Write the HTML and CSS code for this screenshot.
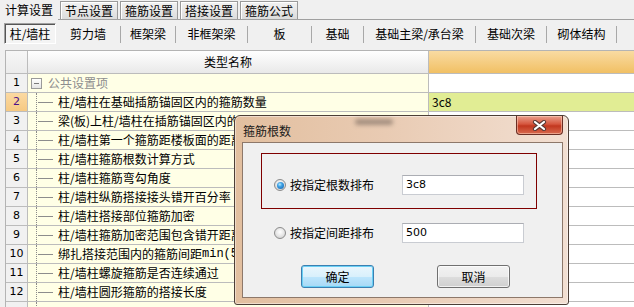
FILE: index.html
```html
<!DOCTYPE html>
<html lang="zh">
<head>
<meta charset="utf-8">
<link rel="stylesheet" href="styles.css">
</head>
<body>
<div class="tabbar">
  <div class="tab active">计算设置</div>
  <div class="tab">节点设置</div>
  <div class="tab">箍筋设置</div>
  <div class="tab">搭接设置</div>
  <div class="tab">箍筋公式</div>
</div>
<div class="subtabs">
  <div class="sub active">柱/墙柱</div>
  <div class="sub">剪力墙</div>
  <div class="sub">框架梁</div>
  <div class="sub">非框架梁</div>
  <div class="sub">板</div>
  <div class="sub">基础</div>
  <div class="sub">基础主梁/承台梁</div>
  <div class="sub">基础次梁</div>
  <div class="sub">砌体结构</div>
  <div class="sub">其它</div>
</div>
<div class="grid">
  <div class="c num hd"></div><div class="c name hd">类型名称</div><div class="c val hdv"></div>

  <div class="c num">1</div><div class="c name"><span class="minus"></span><span class="group">公共设置项</span></div><div class="c val"></div>
  <div class="c num cur">2</div><div class="c name"><span class="br"></span>柱/墙柱在基础插筋锚固区内的箍筋数量</div><div class="c val sel">3c8</div>
  <div class="c num">3</div><div class="c name"><span class="br"></span>梁(板)上柱/墙柱在插筋锚固区内的箍筋数量</div><div class="c val"></div>
  <div class="c num">4</div><div class="c name"><span class="br"></span>柱/墙柱第一个箍筋距楼板面的距离</div><div class="c val"></div>
  <div class="c num">5</div><div class="c name"><span class="br"></span>柱/墙柱箍筋根数计算方式</div><div class="c val"></div>
  <div class="c num">6</div><div class="c name"><span class="br"></span>柱/墙柱箍筋弯勾角度</div><div class="c val"></div>
  <div class="c num">7</div><div class="c name"><span class="br"></span>柱/墙柱纵筋搭接接头错开百分率</div><div class="c val"></div>
  <div class="c num">8</div><div class="c name"><span class="br"></span>柱/墙柱搭接部位箍筋加密</div><div class="c val"></div>
  <div class="c num">9</div><div class="c name"><span class="br"></span>柱/墙柱箍筋加密范围包含错开距离</div><div class="c val"></div>
  <div class="c num">10</div><div class="c name"><span class="br"></span>绑扎搭接范围内的箍筋间距<span class="mono">min(5d,100)</span></div><div class="c val"></div>
  <div class="c num">11</div><div class="c name"><span class="br"></span>柱/墙柱螺旋箍筋是否连续通过</div><div class="c val"></div>
  <div class="c num">12</div><div class="c name"><span class="br"></span>柱/墙柱圆形箍筋的搭接长度</div><div class="c val"></div>
  <div class="c num"></div><div class="c name"><span class="br"></span></div><div class="c val"></div>
</div>

<div class="dialog">
  <div class="titlebar">
    <span class="dtitle">箍筋根数</span>
    <span class="ghost"></span>
    <button class="close" type="button" aria-label="关闭">
      <svg width="15" height="11" viewBox="0 0 15 11">
        <path d="M3 2 L12 9 M12 2 L3 9" stroke="#5a3a36" stroke-width="4.2" stroke-linecap="round" fill="none"/>
        <path d="M3 2 L12 9 M12 2 L3 9" stroke="#ffffff" stroke-width="2.2" stroke-linecap="round" fill="none"/>
      </svg>
    </button>
  </div>
  <div class="client">
    <div class="groupbox">
      <div class="optrow">
        <span class="radio on"></span>
        <span class="olabel">按指定根数排布</span>
        <span class="input">3c8</span>
      </div>
    </div>
    <div class="optrow second">
      <span class="radio"></span>
      <span class="olabel">按指定间距排布</span>
      <span class="input">500</span>
    </div>
    <div class="buttons">
      <button class="btn default" type="button">确定</button>
      <button class="btn" type="button">取消</button>
    </div>
  </div>
</div>
</body>
</html>
```
FILE: styles.css
```css
html, body {
  margin: 0;
  padding: 0;
}
body {
  width: 634px;
  height: 307px;
  overflow: hidden;
  background: #f0f0f0;
  font-family: "Noto Sans CJK SC", "Noto Sans", sans-serif;
  font-size: 12px;
  color: #000;
  position: relative;
}

/* top tabs */
.tabbar {
  display: flex;
  align-items: flex-end;
  height: 20px;
  box-sizing: border-box;
  border-bottom: 1px solid #a0a0a0;
  gap: 2px;
}
.tab {
  width: 58px;
  height: 18px;
  box-sizing: border-box;
  border: 1px solid #9a9a9a;
  border-bottom: none;
  background: linear-gradient(#f2f2f2, #dcdcdc);
  box-shadow: inset 1px 1px 0 #fff;
  text-align: center;
  line-height: 18px;
  white-space: nowrap;
}
.tab.active {
  height: 20px;
  margin-bottom: -1px;
  border: none;
  background: #f0f0f0;
  box-shadow: none;
  line-height: 19px;
}

/* sub tabs */
.subtabs {
  display: grid;
  grid-template-columns: 52px 65px 55px 72px 64px 52px 112px 71px 70px 60px;
  margin: 3px 0 0 4px;
  height: 21px;
  white-space: nowrap;
}
.sub {
  text-align: center;
  border-right: 1px solid #a8a8a8;
  height: 17px;
  margin-top: 3px;
  line-height: 15px;
}
.sub.active {
  height: 21px;
  margin-top: 0;
  line-height: 19px;
  box-sizing: border-box;
  border-top: 1px solid #a0a0a0;
  border-left: 1px solid #a0a0a0;
  border-right: 1px solid #fff;
  border-bottom: 1px solid #fff;
  box-shadow: inset 1px 1px 0 #555;
  background: #f4f4f4;
}

/* data grid */
.grid {
  margin: 6px 0 0 5px;
  display: grid;
  grid-template-columns: 22px 401px 260px;
  grid-auto-rows: 19px;
  grid-template-rows: 23px;
  border-top: 1px solid #b4b4b4;
  border-left: 1px solid #b4b4b4;
}
.c {
  box-sizing: border-box;
  border-right: 1px solid #bcbcbc;
  border-bottom: 1px solid #bcbcbc;
  line-height: 18px;
  white-space: nowrap;
  overflow: hidden;
  display: flex;
  align-items: stretch;
}
.num {
  justify-content: center;
  background: #f1f1f1;
  color: #000;
  font-family: "DejaVu Sans", sans-serif;
  font-size: 11px;
}
.num.cur {
  background: linear-gradient(#fbd9a2, #f6c982);
  color: #4b0f8a;
}
.name {
  background: #ffffe6;
}
.val {
  background: #ffffff;
  padding-left: 3px;
}
.val.sel {
  background: #e1ed94;
}
.hd {
  background: linear-gradient(#ffffff, #e9e9e9);
  justify-content: center;
  line-height: 22px;
}
.num.hd {
  background: linear-gradient(#f6f6f6, #ebebeb);
}
.hdv {
  background: linear-gradient(#f9dba2, #f1c064);
}
.minus {
  width: 11px;
  height: 11px;
  box-sizing: border-box;
  margin: 4px 0 0 3px;
  border: 1px solid #9a9a9a;
  background: linear-gradient(#7a7a7a, #7a7a7a) no-repeat center / 5px 1px, linear-gradient(#ffffff, #e4e4e4);
}
.group {
  color: #8e8e8e;
  margin-left: 6px;
}
.br {
  width: 22px;
  margin-left: 8px;
  flex: none;
  box-sizing: border-box;
  border-left: 1px dotted #8a8a8a;
  background: linear-gradient(#8c8c8c, #8c8c8c) no-repeat 1px 9px / 15px 1px;
}
.mono {
  font-family: "Liberation Mono", monospace;
  font-size: 12px;
}

/* dialog */
.dialog {
  position: absolute;
  left: 234px;
  top: 115px;
  width: 335px;
  height: 190px;
  box-sizing: border-box;
  border: 1px solid #4c3e36;
  border-radius: 6px 6px 3px 3px;
  background: linear-gradient(90deg, #e2bf9f 0%, #e9cbb3 45%, #f2dfd2 100%);
  box-shadow: inset 0 0 0 1px rgba(255,255,255,0.45);
  padding: 0 5px 6px 7px;
  display: flex;
  flex-direction: column;
}
.titlebar {
  height: 26px;
  display: flex;
  align-items: flex-start;
  flex: none;
}
.dtitle {
  margin: 7px 0 0 1px;
  line-height: 16px;
  color: #1a1a1a;
}
.ghost {
  margin: 3px 0 0 64px;
  width: 38px;
  height: 6px;
  border-radius: 3px;
  background: rgba(110, 95, 85, 0.55);
  filter: blur(2px);
}
.close {
  margin-left: auto;
  width: 47px;
  height: 19px;
  padding: 0;
  border: 1px solid #6a2e24;
  border-top: none;
  border-radius: 0 0 4px 4px;
  background: linear-gradient(#e9a08e 0%, #d6563e 45%, #c2371f 55%, #d86a4e 100%);
  box-shadow: inset 0 0 0 1px rgba(255,220,200,0.5);
  display: flex;
  align-items: center;
  justify-content: center;
}
.client {
  flex: 1;
  background: #f0f0f0;
  border: 1px solid #8d786a;
  display: flex;
  flex-direction: column;
  align-items: flex-start;
}
.groupbox {
  margin: 10px 0 0 18px;
  width: 276px;
  height: 56px;
  box-sizing: border-box;
  border: 1px solid #7f0000;
  padding: 21px 0 0 12px;
}
.optrow {
  display: flex;
  align-items: center;
  height: 20px;
}
.optrow.second {
  margin: 14px 0 0 31px;
}
.radio {
  width: 12px;
  height: 12px;
  box-sizing: border-box;
  border-radius: 50%;
  border: 1px solid #8b8b8b;
  background: radial-gradient(circle at 50% 40%, #ffffff 0, #e9e9e9 45%, #c9c9c9 100%);
  margin-right: 4px;
  flex: none;
  display: flex;
  align-items: center;
  justify-content: center;
}
.radio.on::after {
  content: "";
  width: 7px;
  height: 7px;
  border-radius: 50%;
  background: radial-gradient(circle at 40% 35%, #b8ecff 0, #3fa2e6 35%, #0d5aa6 100%);
}
.olabel {
  width: 112px;
  line-height: 16px;
}
.input {
  width: 122px;
  height: 20px;
  box-sizing: border-box;
  border: 1px solid #c9ccd2;
  border-top-color: #abadb3;
  background: #fff;
  padding-left: 3px;
  line-height: 17px;
  font-family: "DejaVu Sans", sans-serif;
  font-size: 11px;
}
.buttons {
  display: flex;
  gap: 63px;
  margin: 22px 0 0 58px;
}
.btn {
  width: 73px;
  height: 23px;
  padding: 0;
  font-family: "Noto Sans CJK SC", sans-serif;
  font-size: 12px;
  color: #000;
  border: 1px solid #707070;
  border-radius: 3px;
  background: linear-gradient(#f2f2f2 0%, #ebebeb 50%, #dddddd 51%, #cfcfcf 100%);
  box-shadow: inset 0 0 0 1px rgba(255,255,255,0.7);
  line-height: 20px;
}
.btn.default {
  border-color: #3c7fb1;
  background: linear-gradient(#eaf6fd 0%, #d9f0fc 50%, #bee6fd 51%, #a7d9f5 100%);
  box-shadow: inset 0 0 0 1px #6ad0f5;
}
```
